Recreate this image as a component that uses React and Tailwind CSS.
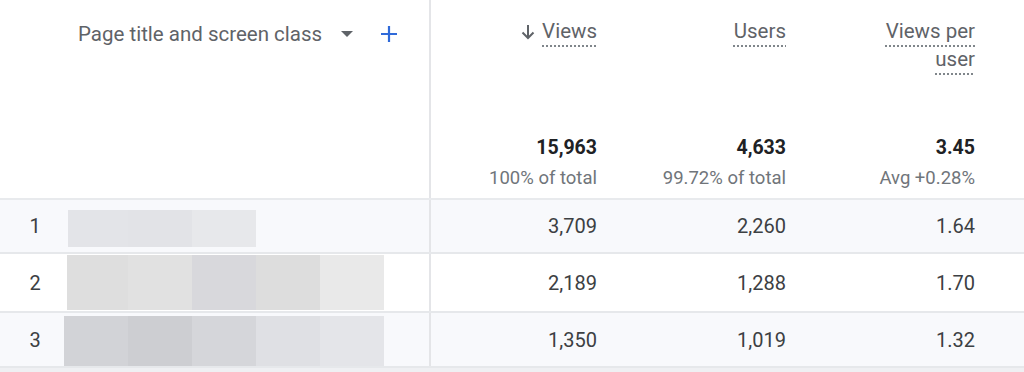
import React from 'react';

const rows = [
    {
        n: 1,
        views: '3,709',
        users: '2,260',
        vpu: '1.64',
        bg: 'bg-[#f8f9fc]',
        h: 'h-[54px]',
        blur: 'ml-[4px] mt-[10px] h-[37px]',
        tiles: ['bg-[#e3e4e8] w-[60px]', 'bg-[#e2e3e7] w-[64px]', 'bg-[#e7e8eb] w-[64px]'],
    },
    {
        n: 2,
        views: '2,189',
        users: '1,288',
        vpu: '1.70',
        bg: 'bg-white',
        h: 'h-[59px]',
        blur: 'ml-[3px] mt-[1px] h-[55px]',
        tiles: [
            'bg-[#dedede] w-[61px]',
            'bg-[#e1e1e1] w-[64px]',
            'bg-[#d8d8dc] w-[64px]',
            'bg-[#dddddd] w-[64px]',
            'bg-[#e9e9e9] w-[64px]',
        ],
    },
    {
        n: 3,
        views: '1,350',
        users: '1,019',
        vpu: '1.32',
        bg: 'bg-[#f8f9fc]',
        h: 'h-[55px]',
        blur: 'ml-0 mt-[3px] h-[58px]',
        tiles: [
            'bg-[#d2d3d7] w-[64px]',
            'bg-[#cdced2] w-[64px]',
            'bg-[#d5d6da] w-[64px]',
            'bg-[#dfe0e4] w-[64px]',
            'bg-[#e4e5e9] w-[64px]',
        ],
    },
];

const Metric = ({ children, arrow }) => (
    <div className="flex justify-end items-start gap-[7px] text-right">
        {arrow && (
            <svg width="14" height="16" viewBox="0 0 14 16" className="mt-[7px]">
                <path d="M7 1v13M1.5 8.5L7 14l5.5-5.5" stroke="#5f6368" strokeWidth="2" fill="none" />
            </svg>
        )}
        <span className="underline decoration-dotted decoration-[#80868b] decoration-2 underline-offset-[7px] leading-[28px]">
            {children}
        </span>
    </div>
);

const Total = ({ value, sub }) => (
    <div className="flex flex-col items-end pr-[23px]">
        <div className="text-[19.5px] font-bold text-[#202124] leading-[28px]">{value}</div>
        <div className="text-[18.5px] text-[#70757a] leading-[24px] mt-[4px]">{sub}</div>
    </div>
);

export default function App() {
    return (
        <div
            className="w-[1024px] h-[372px] overflow-hidden bg-white"
            style={{ fontFamily: 'Roboto, "Liberation Sans", sans-serif' }}
        >
            {/* header */}
            <div className="grid grid-cols-[431px_189px_189px_189px_1fr] h-[200px] border-b-2 border-[#e8eaed]">
                <div className="border-r-2 border-[#e4e5e8] pl-[78px] pt-[20px] flex items-start">
                    <div className="flex items-center h-[28px] text-[20.5px] text-[#5f6368]">
                        <span>Page title and screen class</span>
                        <svg width="12" height="6" viewBox="0 0 12 6" className="ml-[19px]">
                            <path d="M0 0h12L6 6z" fill="#5f6368" />
                        </svg>
                        <svg width="18" height="18" viewBox="0 0 18 18" className="ml-[27px]">
                            <path d="M9 1v16M1 9h16" stroke="#2f6ad9" strokeWidth="2.2" />
                        </svg>
                    </div>
                </div>
                {[
                    { label: 'Views', arrow: true, value: '15,963', sub: '100% of total' },
                    { label: 'Users', value: '4,633', sub: '99.72% of total' },
                    { label: 'Views per user', value: '3.45', sub: 'Avg +0.28%' },
                ].map((c) => (
                    <div key={c.label} className="flex flex-col justify-between pt-[17px] pb-[8px] text-[20.5px] text-[#5f6368]">
                        <div className="pr-[23px] pl-[60px]">
                            <Metric arrow={c.arrow}>{c.label}</Metric>
                        </div>
                        <Total value={c.value} sub={c.sub} />
                    </div>
                ))}
                <div />
            </div>

            {/* rows */}
            {rows.map((r) => (
                <div
                    key={r.n}
                    className={`grid grid-cols-[431px_189px_189px_189px_1fr] ${r.h} ${r.bg} border-b-2 border-[#e6e8eb] text-[20px] text-[#3c4043]`}
                >
                    <div className="border-r-2 border-[#e4e5e8] flex overflow-hidden">
                        <div className="w-[64px] shrink-0 flex items-center justify-center pl-[6px] h-full">
                            <span>{r.n}</span>
                        </div>
                        <div className={`flex shrink-0 ${r.blur}`}>
                            {r.tiles.map((t, i) => (
                                <div key={i} className={`h-full ${t}`} />
                            ))}
                        </div>
                    </div>
                    <div className="flex items-center justify-end pr-[23px]">{r.views}</div>
                    <div className="flex items-center justify-end pr-[23px]">{r.users}</div>
                    <div className="flex items-center justify-end pr-[23px]">{r.vpu}</div>
                    <div />
                </div>
            ))}
            <div className="h-[10px] bg-[#eff0f3]" />
        </div>
    );
}
